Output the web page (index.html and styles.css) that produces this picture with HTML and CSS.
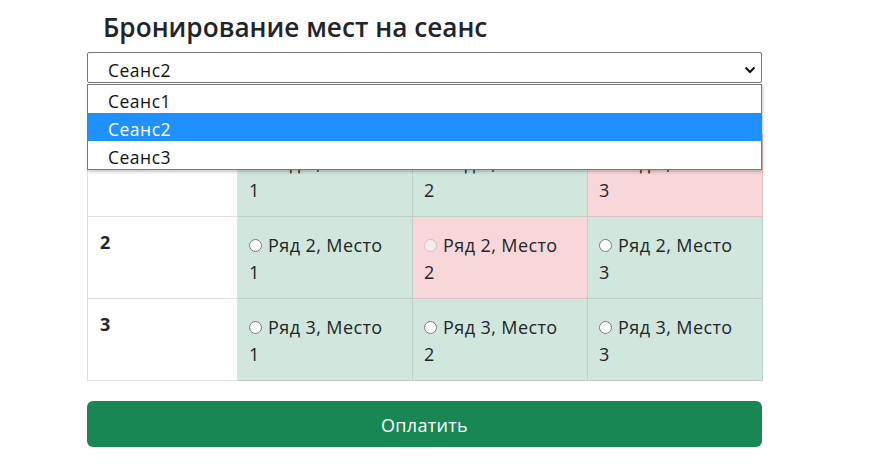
FILE: index.html
```html
<!DOCTYPE html>
<html lang="ru">
<head>
<meta charset="utf-8">
<title>Бронирование мест на сеанс</title>
<link rel="stylesheet" href="styles.css">
</head>
<body>
<div class="page">
  <h1 class="title">Бронирование мест на сеанс</h1>
  <div class="select-wrap">
    <div class="select">
      <span class="select-value">Сеанс2</span>
      <svg class="chevron" width="12" height="8" viewBox="0 0 12 8"><path d="M1.5 1.5 L6 6 L10.5 1.5" fill="none" stroke="#111" stroke-width="2"/></svg>
    </div>
    <ul class="popup">
      <li class="option">Сеанс1</li>
      <li class="option active">Сеанс2</li>
      <li class="option">Сеанс3</li>
    </ul>
  </div>
  <table class="seats">
    <colgroup><col class="c-row"><col class="c-seat"><col class="c-seat"><col class="c-seat"></colgroup>
    <tbody>
      <tr>
        <th class="row-num">1</th>
        <td class="seat free"><label><input type="radio" name="seat"> Ряд 1, Место 1</label></td>
        <td class="seat free"><label><input type="radio" name="seat"> Ряд 1, Место 2</label></td>
        <td class="seat taken"><label><input type="radio" name="seat" disabled> Ряд 1, Место 3</label></td>
      </tr>
      <tr>
        <th class="row-num">2</th>
        <td class="seat free"><label><input type="radio" name="seat"> Ряд 2, Место 1</label></td>
        <td class="seat taken"><label><input type="radio" name="seat" disabled> Ряд 2, Место 2</label></td>
        <td class="seat free"><label><input type="radio" name="seat"> Ряд 2, Место 3</label></td>
      </tr>
      <tr>
        <th class="row-num">3</th>
        <td class="seat free"><label><input type="radio" name="seat"> Ряд 3, Место 1</label></td>
        <td class="seat free"><label><input type="radio" name="seat"> Ряд 3, Место 2</label></td>
        <td class="seat free"><label><input type="radio" name="seat"> Ряд 3, Место 3</label></td>
      </tr>
    </tbody>
  </table>
  <button class="pay" type="button">Оплатить</button>
</div>
</body>
</html>
```
FILE: styles.css
```css
* { box-sizing: border-box; }
body {
  margin: 0;
  font-family: "Open Sans", "Noto Sans", sans-serif;
  color: #212529;
  background: #fff;
}
.page {
  width: 675px;
  margin-left: 87px;
}
.title {
  margin: 12px 0 9px 16px;
  font-size: 26.2px;
  font-weight: 600;
  line-height: 31px;
}
.select-wrap {
  position: relative;
}
.select {
  display: flex;
  align-items: flex-start;
  height: 31px;
  border: 1px solid #767676;
  border-radius: 2px;
  padding: 5px 5px 0 20px;
  font-size: 17.5px;
  letter-spacing: 0.5px;
  line-height: 24px;
  color: #111;
}
.select-value { flex: 1; }
.chevron { margin-top: 8px; }
.popup {
  position: absolute;
  top: 32px;
  left: 0;
  right: 0;
  z-index: 5;
  margin: 0;
  padding: 0;
  list-style: none;
  background: #fff;
  border: 1px solid #7a7a7a;
  box-shadow: 1px 2px 3px rgba(0,0,0,0.22);
}
.option {
  height: 28px;
  padding: 5px 0 0 20px;
  font-size: 17.5px;
  letter-spacing: 0.5px;
  line-height: 23px;
  color: #111;
}
.option.active {
  background: #1e90ff;
  color: #fff;
}
.seats {
  width: 675px;
  margin-top: 51px;
  border-collapse: collapse;
  table-layout: fixed;
  font-size: 18px;
  line-height: 27px;
  letter-spacing: 0.4px;
}
.c-row { width: 150px; }
.c-seat { width: 175px; }
.row-num {
  padding: 12px;
  text-align: left;
  vertical-align: top;
  font-weight: 700;
  background: #fff;
  border: 1px solid #dee2e6;
}
.seat {
  padding: 15px 20px 12px 11px;
  vertical-align: top;
}
.seat input {
  margin: 3px 1px 0 0;
}
.free {
  background: #d1e7dd;
  border: 1px solid #bcd0c7;
}
.taken {
  background: #f8d7da;
  border: 1px solid #dfc2c4;
}
.pay {
  display: block;
  width: 100%;
  height: 46px;
  margin-top: 20px;
  padding: 2px 0 0;
  border: 0;
  border-radius: 6px;
  background: #198754;
  color: #fff;
  font-family: inherit;
  font-size: 18px;
  letter-spacing: 0.3px;
}
```
